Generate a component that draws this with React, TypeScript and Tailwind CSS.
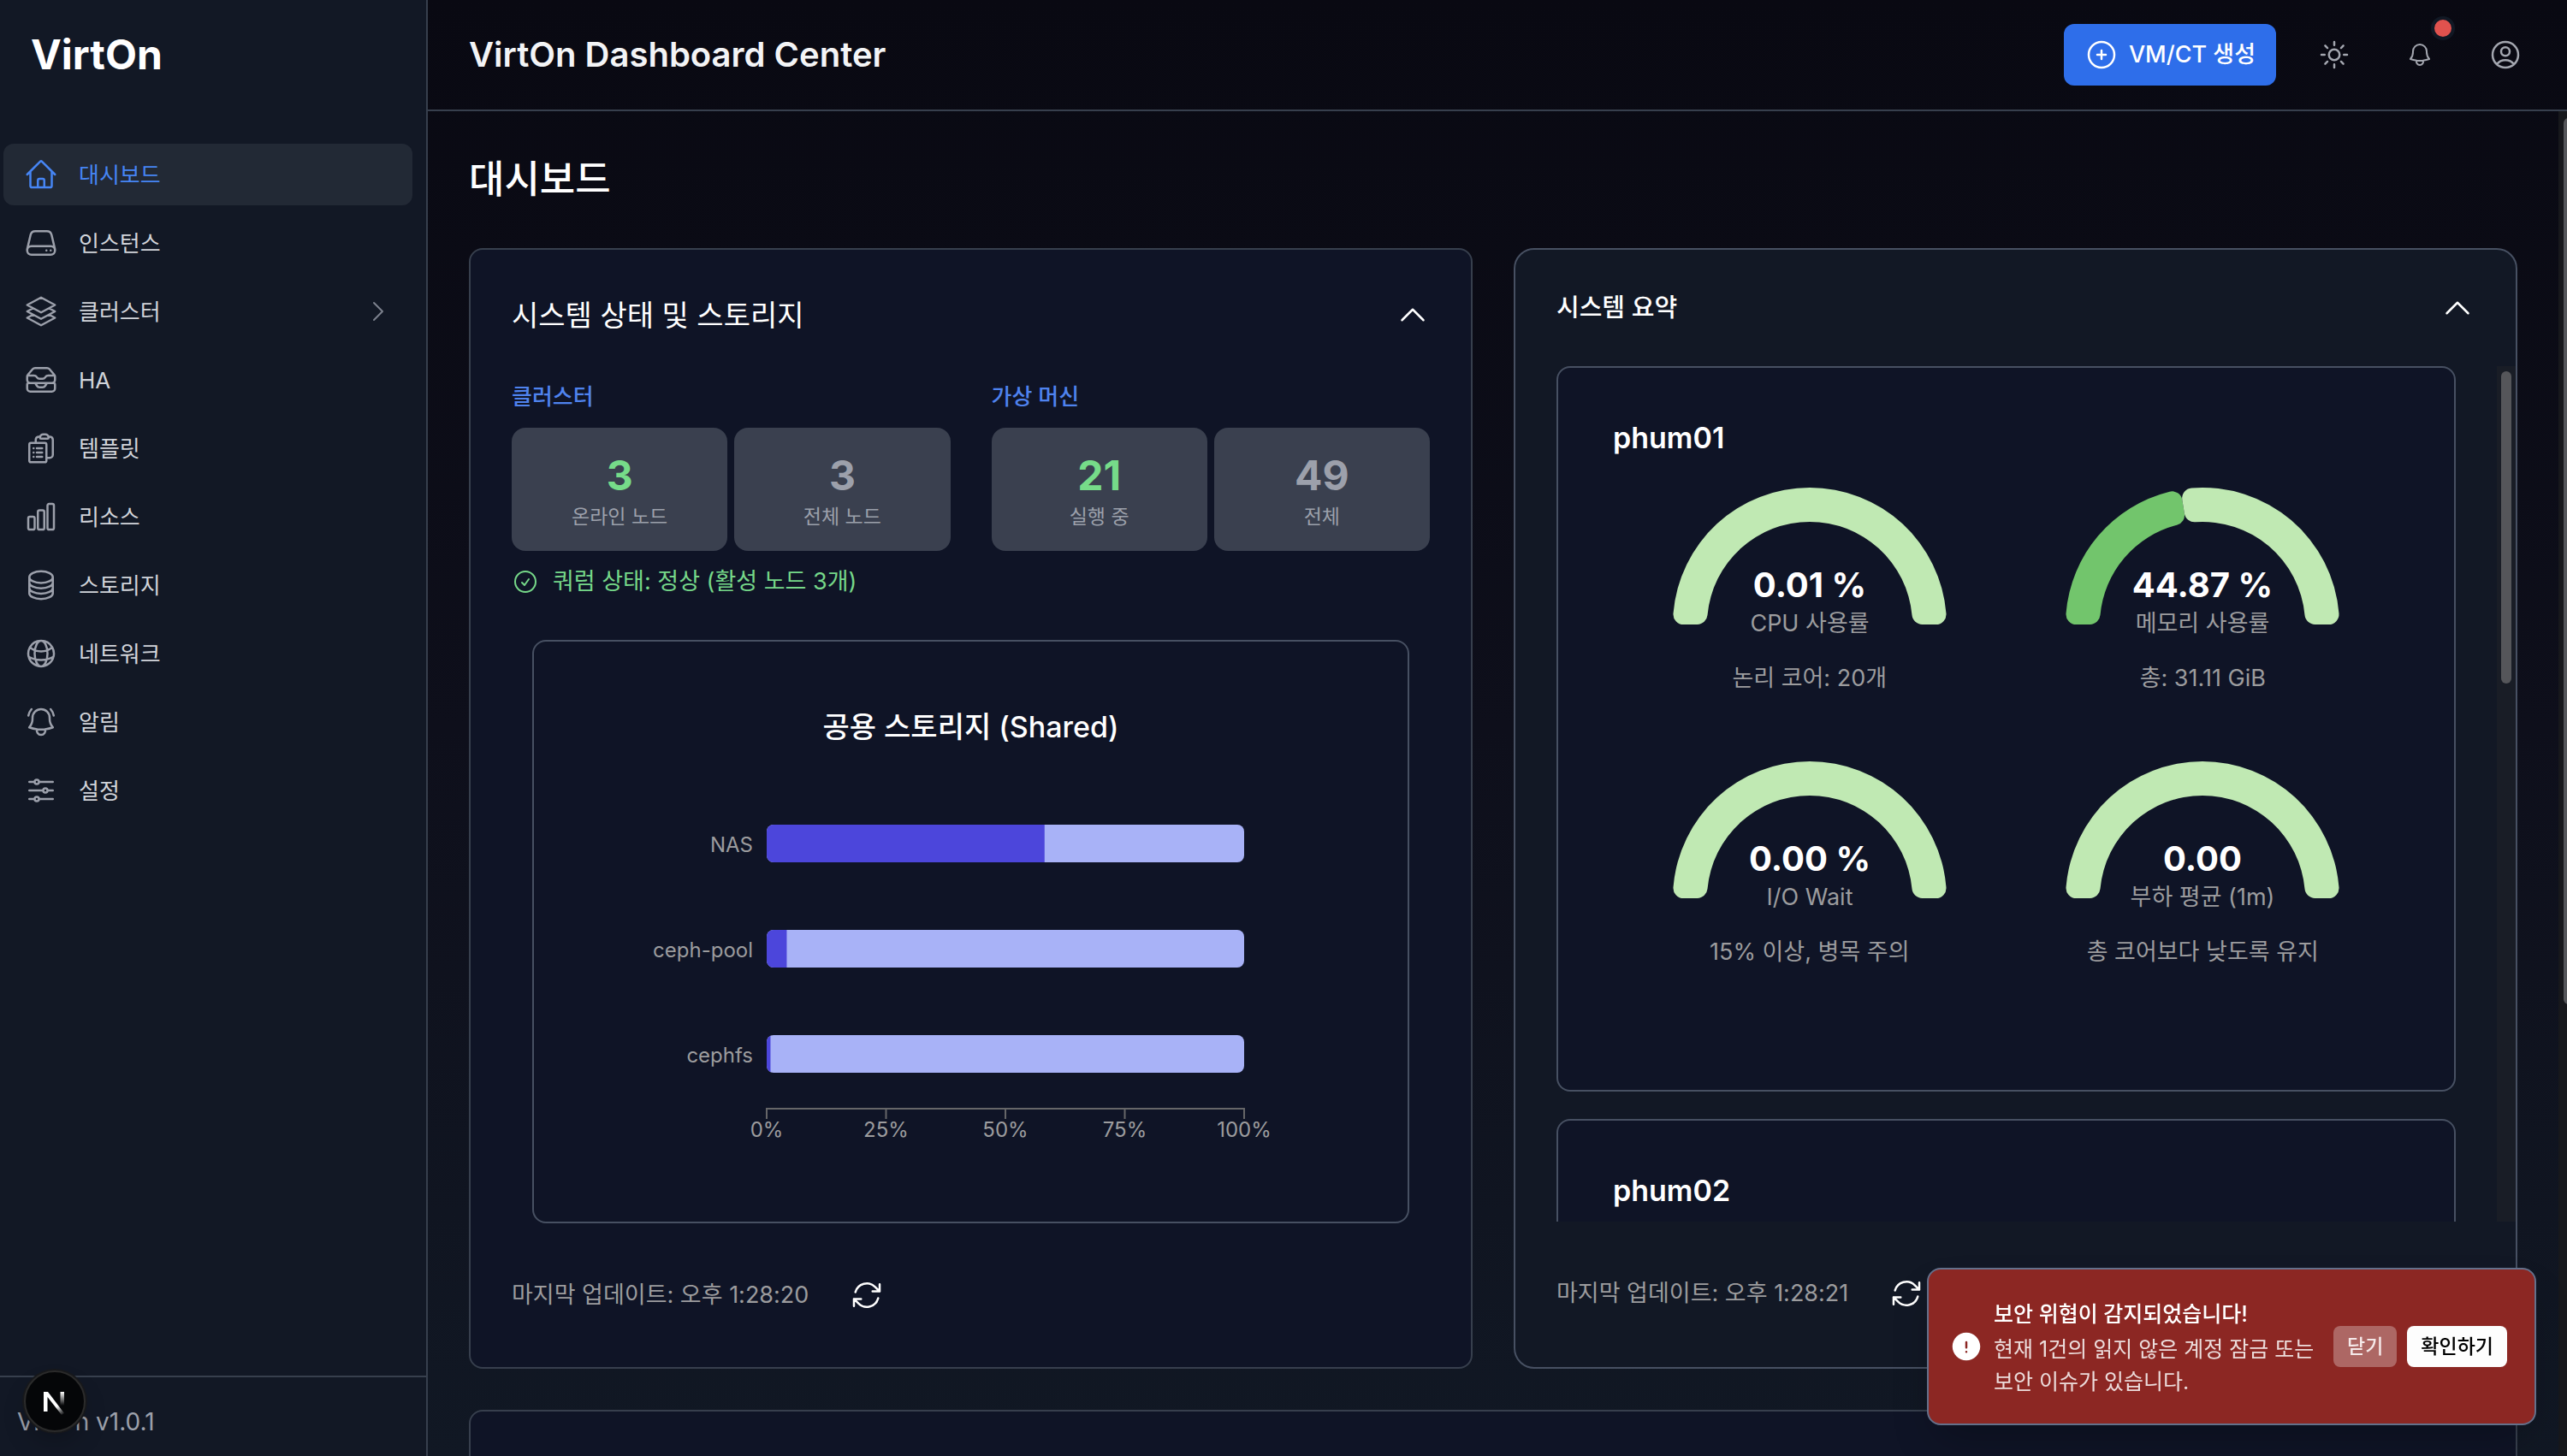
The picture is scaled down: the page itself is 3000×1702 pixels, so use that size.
import type { ReactNode } from "react";
import type { IconType } from "react-icons";
import {
  HiExclamationCircle,
  HiOutlineAdjustmentsHorizontal,
  HiOutlineArrowPath,
  HiOutlineBell,
  HiOutlineBellAlert,
  HiOutlineChartBar,
  HiOutlineCheckCircle,
  HiOutlineChevronRight,
  HiOutlineChevronUp,
  HiOutlineCircleStack,
  HiOutlineClipboardDocumentList,
  HiOutlineGlobeAlt,
  HiOutlineHome,
  HiOutlineInboxStack,
  HiOutlinePlusCircle,
  HiOutlineServer,
  HiOutlineSquare3Stack3D,
  HiOutlineSun,
  HiOutlineUserCircle,
} from "react-icons/hi2";

type MenuItem = {
  label: string;
  icon: IconType;
  active?: boolean;
  expandable?: boolean;
};

const menu: MenuItem[] = [
  { label: "대시보드", icon: HiOutlineHome, active: true },
  { label: "인스턴스", icon: HiOutlineServer },
  { label: "클러스터", icon: HiOutlineSquare3Stack3D, expandable: true },
  { label: "HA", icon: HiOutlineInboxStack },
  { label: "템플릿", icon: HiOutlineClipboardDocumentList },
  { label: "리소스", icon: HiOutlineChartBar },
  { label: "스토리지", icon: HiOutlineCircleStack },
  { label: "네트워크", icon: HiOutlineGlobeAlt },
  { label: "알림", icon: HiOutlineBellAlert },
  { label: "설정", icon: HiOutlineAdjustmentsHorizontal },
];

const statGroups = [
  {
    title: "클러스터",
    stats: [
      { value: 3, label: "온라인 노드", online: true },
      { value: 3, label: "전체 노드", online: false },
    ],
  },
  {
    title: "가상 머신",
    stats: [
      { value: 21, label: "실행 중", online: true },
      { value: 49, label: "전체", online: false },
    ],
  },
];

const storages = [
  { name: "NAS", used: 58.2 },
  { name: "ceph-pool", used: 4.2 },
  { name: "cephfs", used: 0.8 },
];

const gauges = [
  { value: "0.01 %", ratio: 0, label: "CPU 사용률", note: "논리 코어: 20개" },
  { value: "44.87 %", ratio: 0.4487, label: "메모리 사용률", note: "총: 31.11 GiB" },
  { value: "0.00 %", ratio: 0, label: "I/O Wait", note: "15% 이상, 병목 주의" },
  { value: "0.00", ratio: 0, label: "부하 평균 (1m)", note: "총 코어보다 낮도록 유지" },
];

function Sidebar() {
  return (
    <aside className="flex w-[500px] shrink-0 flex-col border-r-2 border-[#373f4d] bg-[#121825]">
      <div className="flex h-[128px] items-center px-9">
        <span className="text-5xl font-bold text-white">VirtOn</span>
      </div>
      <nav className="mt-10 flex flex-1 flex-col gap-2 pr-4 pl-1">
        {menu.map(({ label, icon: Icon, active, expandable }) => (
          <a
            key={label}
            href="#"
            className={
              active
                ? "flex h-[72px] items-center gap-6 rounded-xl bg-[#222935] px-6 text-[26px] text-[#4685f4]"
                : "flex h-[72px] items-center gap-6 rounded-xl px-6 text-[26px] text-[#d1d4da]"
            }
          >
            <Icon className={active ? "h-10 w-10" : "h-10 w-10 text-[#9ca0ab]"} />
            <span className="flex-1">{label}</span>
            {expandable && <HiOutlineChevronRight className="h-8 w-8 text-[#7c818d]" />}
          </a>
        ))}
      </nav>
      <div className="flex h-[94px] items-center border-t-2 border-[#373f4d] px-5 pt-3">
        <span className="text-[28px] text-[#9ca0ab]">VirtOn v1.0.1</span>
      </div>
    </aside>
  );
}

function Header() {
  return (
    <header className="flex h-[130px] shrink-0 items-center border-b-2 border-[#373f4d] pr-9 pl-12">
      <h1 className="flex-1 text-[40px] font-semibold text-[#f3f4f6]">
        VirtOn Dashboard Center
      </h1>
      <button
        type="button"
        className="mr-8 flex h-[72px] items-center gap-3 rounded-xl bg-[#2e6eea] px-6 text-[27px] font-medium text-white"
      >
        <HiOutlinePlusCircle className="h-10 w-10" />
        VM/CT 생성
      </button>
      <div className="flex gap-7 text-[#a3a6af]">
        <button type="button" aria-label="테마" className="flex h-[72px] w-[72px] items-center justify-center">
          <HiOutlineSun className="h-10 w-10" />
        </button>
        <button
          type="button"
          aria-label="알림"
          className="relative flex h-[72px] w-[72px] items-center justify-center"
        >
          <HiOutlineBell className="h-8 w-8" />
          <span className="absolute -top-[9px] -right-[5px] h-7 w-7 rounded-full border-4 border-[#111824] bg-[#e0524e]" />
        </button>
        <button type="button" aria-label="내 계정" className="flex h-[72px] w-[72px] items-center justify-center">
          <HiOutlineUserCircle className="h-10 w-10" />
        </button>
      </div>
    </header>
  );
}

function CollapseButton() {
  return (
    <button type="button" aria-label="접기" className="text-white">
      <HiOutlineChevronUp className="h-10 w-10" />
    </button>
  );
}

function UpdatedAt({ time }: { time: string }) {
  return (
    <div className="mt-12 flex h-[72px] items-center gap-12">
      <span className="text-[27px] text-[#9c9c9e]">마지막 업데이트: 오후 {time}</span>
      <button type="button" aria-label="새로고침" className="text-white">
        <HiOutlineArrowPath className="h-10 w-10" />
      </button>
    </div>
  );
}

function StorageChart() {
  const left = 162;
  const width = 558;
  return (
    <svg width="801" height="400" viewBox="0 0 801 400" fontSize="24" fill="#9c9c9e">
      {storages.map((storage, i) => {
        const y = 22 + i * 123;
        const used = (width * storage.used) / 100;
        return (
          <g key={storage.name}>
            <clipPath id={`bar-${i}`}>
              <rect x={left} y={y} width={width} height="44" rx="8" />
            </clipPath>
            <g clipPath={`url(#bar-${i})`}>
              <rect x={left} y={y} width={width} height="44" fill="#a8b2f7" />
              <rect x={left} y={y} width={used} height="44" fill="#4c46db" />
            </g>
            <text x={left - 16} y={y + 32} textAnchor="end">
              {storage.name}
            </text>
          </g>
        );
      })}
      <path
        d={`M${left} 366V354H${left + width}V366`}
        fill="none"
        stroke="#666668"
        strokeWidth="2"
      />
      {[0, 25, 50, 75, 100].map((tick) => {
        const x = left + (width * tick) / 100;
        return (
          <g key={tick}>
            <path d={`M${x} 354V366`} stroke="#666668" strokeWidth="2" />
            <text x={x} y="387" textAnchor="middle">
              {tick}%
            </text>
          </g>
        );
      })}
    </svg>
  );
}

function StatusCard() {
  return (
    <section className="rounded-2xl border-2 border-[#373f4d] bg-[#0f1426] p-12">
      <div className="flex h-14 items-center justify-between">
        <h3 className="text-[34px] text-white">시스템 상태 및 스토리지</h3>
        <CollapseButton />
      </div>
      <div className="mt-12 grid grid-cols-2 gap-12">
        {statGroups.map((group) => (
          <div key={group.title}>
            <h4 className="text-[26px] leading-10 font-medium text-[#4f83ee]">{group.title}</h4>
            <div className="mt-4 grid grid-cols-2 gap-2">
              {group.stats.map((stat) => (
                <div
                  key={stat.label}
                  className="flex h-36 flex-col items-center justify-center rounded-2xl bg-[#3a404f] pt-1"
                >
                  <span
                    className={
                      stat.online
                        ? "text-5xl leading-[60px] font-bold text-[#76db89]"
                        : "text-5xl leading-[60px] font-bold text-[#9ca0ab]"
                    }
                  >
                    {stat.value}
                  </span>
                  <span className="text-[23px] leading-9 text-[#9ca0ab]">{stat.label}</span>
                </div>
              ))}
            </div>
          </div>
        ))}
      </div>
      <p className="mt-4 flex h-10 items-center gap-4 text-[27px] text-[#76d889]">
        <HiOutlineCheckCircle className="h-8 w-8" />
        쿼럼 상태: 정상 (활성 노드 3개)
      </p>
      <div className="mx-6 mt-12 flex h-[682px] flex-col items-center rounded-2xl border-2 border-[#475062] pt-[76px]">
        <h4 className="text-[34px] leading-[48px] font-medium text-white">
          공용 스토리지 (Shared)
        </h4>
        <div className="mt-[68px]">
          <StorageChart />
        </div>
      </div>
      <UpdatedAt time="1:28:20" />
    </section>
  );
}

const point = (radius: number, angle: number) =>
  `${162 + radius * Math.cos(angle)} ${200 - radius * Math.sin(angle)}`;

// Ring sector with rounded corners, from angle `a` down to angle `b` (radians).
function sector(a: number, b: number) {
  const outer = 160;
  const inner = 120;
  const corner = 12;
  const to = Math.asin(corner / (outer - corner));
  const ti = Math.asin(corner / (inner + corner));
  const lo = (outer - corner) * Math.cos(to);
  const li = (inner + corner) * Math.cos(ti);
  const arc = `A${corner} ${corner} 0 0 1`;
  return [
    `M${point(lo, a)}`,
    `${arc} ${point(outer, a - to)}`,
    `A${outer} ${outer} 0 0 1 ${point(outer, b + to)}`,
    `${arc} ${point(lo, b)}`,
    `L${point(li, b)}`,
    `${arc} ${point(inner, b + ti)}`,
    `A${inner} ${inner} 0 0 0 ${point(inner, a - ti)}`,
    `${arc} ${point(li, a)}Z`,
  ].join("");
}

function Gauge({ value, ratio, label, note }: (typeof gauges)[number]) {
  const split = Math.PI * (1 - ratio);
  return (
    <div className="flex h-80 flex-col items-center">
      <svg width="324" height="240" viewBox="0 0 324 240" textAnchor="middle">
        {ratio > 0 && <path d={sector(Math.PI, split)} fill="#72c56c" />}
        <path d={sector(split, 0)} fill="#c0e9b3" />
        <text x="162" y="168" fontSize="40" fontWeight="700" fill="#fff">
          {value}
        </text>
        <text x="162" y="208" fontSize="27" fill="#9c9c9e">
          {label}
        </text>
      </svg>
      <p className="text-[27px] leading-[46px] text-[#9c9c9e]">{note}</p>
    </div>
  );
}

function NodeCard({ name, children }: { name: string; children?: ReactNode }) {
  return (
    <article className="h-[848px] shrink-0 rounded-2xl border-2 border-[#475062] bg-[#0f1426] p-16">
      <h4 className="text-[34px] leading-9 font-semibold text-white">{name}</h4>
      {children}
    </article>
  );
}

function SummaryCard() {
  return (
    <section className="rounded-3xl border-2 border-[#475062] bg-[#121825] py-12 pl-12">
      <div className="flex h-10 items-center justify-between pr-12">
        <h3 className="text-[29px] font-medium text-white">시스템 요약</h3>
        <CollapseButton />
      </div>
      <div className="mt-12 flex h-[1000px] overflow-hidden">
        <div className="mr-12 flex flex-1 flex-col gap-8">
          <NodeCard name="phum01">
            <div className="grid grid-cols-2">
              {gauges.map((gauge) => (
                <Gauge key={gauge.label} {...gauge} />
              ))}
            </div>
          </NodeCard>
          <NodeCard name="phum02" />
        </div>
        <div className="flex w-[22px] justify-center bg-[#191d26] pt-1.5">
          <div className="h-[365px] w-3 rounded-full bg-[#55565a]" />
        </div>
      </div>
      <UpdatedAt time="1:28:21" />
    </section>
  );
}

function SecurityToast() {
  return (
    <div
      role="alert"
      className="fixed right-9 bottom-9 flex h-[184px] w-[712px] items-center rounded-2xl border-2 border-[#64708a] bg-[#8c2723] pr-8 pl-6 shadow-2xl"
    >
      <HiExclamationCircle className="h-10 w-10 shrink-0 text-white" />
      <div className="ml-3 flex-1 text-[25px]">
        <p className="leading-[44px] font-medium text-white">보안 위협이 감지되었습니다!</p>
        <p className="leading-[38px] whitespace-nowrap text-[#ecdcdb]">
          현재 1건의 읽지 않은 계정 잠금 또는
          <br />
          보안 이슈가 있습니다.
        </p>
      </div>
      <button
        type="button"
        className="h-12 rounded-lg bg-[#ad6764] px-4 text-[23px] font-medium text-[#f5e9e9]"
      >
        닫기
      </button>
      <button
        type="button"
        className="ml-3 h-12 rounded-lg bg-[#fdfdfd] px-4 text-[23px] font-medium text-black"
      >
        확인하기
      </button>
    </div>
  );
}

function DevBadge() {
  return (
    <button
      type="button"
      aria-label="Next.js"
      className="fixed bottom-7 left-7 flex h-[72px] w-[72px] items-center justify-center rounded-full border-2 border-[#2b2b2b] bg-[#050608] shadow-[0_0_0_2px_#17181b,0_16px_32px_-8px_rgba(0,0,0,0.3)]"
    >
      <svg width="32" height="32" viewBox="0 0 32 32" fill="none">
        <defs>
          <linearGradient id="diagonal" x1="17" y1="19" x2="26" y2="32" gradientUnits="userSpaceOnUse">
            <stop offset="0.2" stopColor="#fff" />
            <stop offset="1" stopColor="#fff" stopOpacity="0" />
          </linearGradient>
          <linearGradient id="stem" x1="0" y1="5" x2="0" y2="21" gradientUnits="userSpaceOnUse">
            <stop stopColor="#fff" />
            <stop offset="1" stopColor="#fff" stopOpacity="0" />
          </linearGradient>
        </defs>
        <path d="M3 28V5h5l19 25-3 2L7.500 11v17z" fill="url(#diagonal)" />
        <path d="M22.500 5H27v16h-4.500z" fill="url(#stem)" />
      </svg>
    </button>
  );
}

export default function App() {
  return (
    <div className="flex h-screen overflow-hidden bg-linear-to-b from-[#090912] via-[#0e0f1b] to-[#111824] font-['Inter','Noto_Sans_CJK_KR',sans-serif] text-white">
      <Sidebar />
      <div className="flex min-w-0 flex-1 flex-col">
        <Header />
        <div className="flex min-h-0 flex-1">
          <main className="min-w-0 flex-1 overflow-hidden px-12 pt-12">
            <h2 className="text-[45px] leading-[64px] font-medium">대시보드</h2>
            <div className="mt-12 grid grid-cols-2 gap-12">
              <StatusCard />
              <SummaryCard />
            </div>
            <section className="mt-12 h-96 rounded-2xl border-2 border-[#373f4d] bg-[#0f1426]" />
          </main>
          <div className="w-2.5 overflow-hidden bg-[#17181c] pt-2 pl-1.5">
            <div className="h-[1036px] w-3 rounded-full bg-[#55565a]" />
          </div>
        </div>
      </div>
      <SecurityToast />
      <DevBadge />
    </div>
  );
}
